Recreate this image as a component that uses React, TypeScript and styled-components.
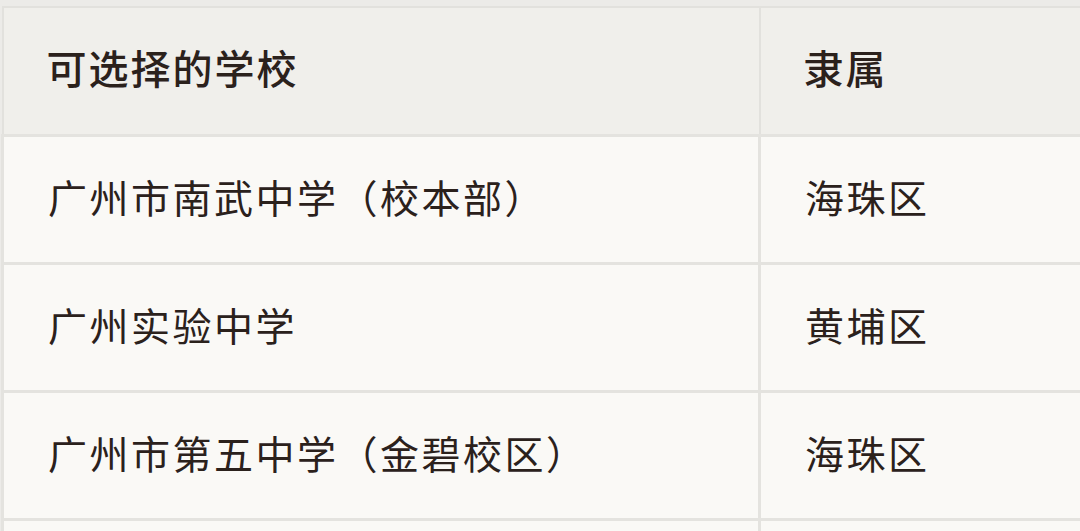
import { FC } from "react";
import styled, { createGlobalStyle } from "styled-components";

const GlobalStyle = createGlobalStyle`
    html, body {
        margin: 0;
        padding: 0;
        background: #ecebe8;
        overflow: hidden;
    }
    body {
        font-family: "Noto Sans CJK SC", "Noto Sans", sans-serif;
    }
`

const Page = styled.div`
    padding-top: 6px;
    padding-left: 1px;
`

const Table = styled.table`
    border-collapse: collapse;
    width: 1300px;
    table-layout: fixed;
    color: #2b211c;
`

const HeadCell = styled.th<{ $width?: number }>`
    width: ${({ $width }) => ($width ? `${$width}px` : "auto")};
    height: 118px;
    padding: 0 0 8px 43px;
    text-align: left;
    font-size: 40px;
    font-weight: 500;
    letter-spacing: 2px;
    background: #f0efeb;
    border: 2px solid #e2e1dd;
`

const Cell = styled.td`
    height: 117px;
    padding: 0 0 8px 44px;
    font-size: 39px;
    font-weight: 400;
    letter-spacing: 2.5px;
    background: #faf9f6;
    border: 3px solid #e4e3df;
    white-space: nowrap;
`

type School = { name: string, district: string }

const schools: School[] = [
    { name: "广州市南武中学（校本部）", district: "海珠区" },
    { name: "广州实验中学", district: "黄埔区" },
    { name: "广州市第五中学（金碧校区）", district: "海珠区" },
    // next row only peeks in at the bottom edge
    { name: "", district: "" },
]

const App: FC = () => {
    return (
        <>
            <GlobalStyle />
            <Page>
                <Table>
                    <thead>
                        <tr>
                            <HeadCell $width={712}>可选择的学校</HeadCell>
                            <HeadCell>隶属</HeadCell>
                        </tr>
                    </thead>
                    <tbody>
                        {schools.map((s, i) => (
                            <tr key={i}>
                                <Cell>{s.name}</Cell>
                                <Cell>{s.district}</Cell>
                            </tr>
                        ))}
                    </tbody>
                </Table>
            </Page>
        </>
    )
}

export default App
